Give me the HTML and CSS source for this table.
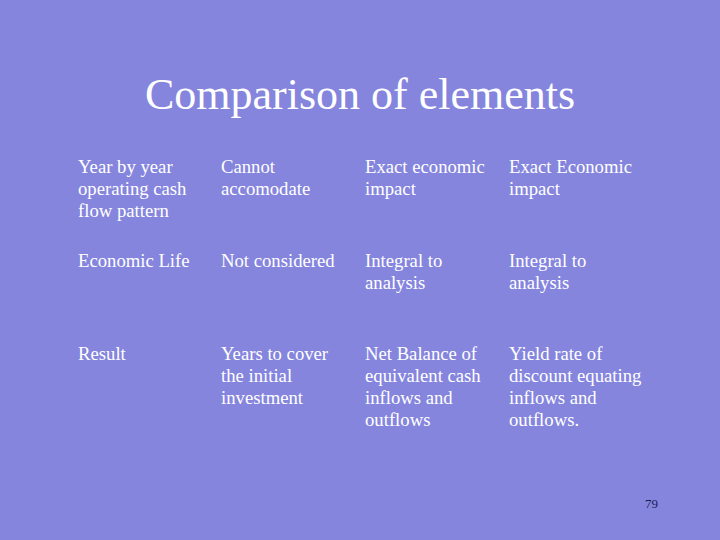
FILE: index.html
```html
<!DOCTYPE html>
<html>
<head>
<meta charset="utf-8">
<link rel="stylesheet" href="styles.css">
</head>
<body>
<div class="slide">
  <h1 class="title">Comparison of elements</h1>
  <div class="table">
    <div class="cell">Year by year<br>operating cash<br>flow pattern</div>
    <div class="cell">Cannot<br>accomodate</div>
    <div class="cell">Exact economic<br>impact</div>
    <div class="cell">Exact Economic<br>impact</div>

    <div class="cell">Economic Life</div>
    <div class="cell">Not considered</div>
    <div class="cell">Integral to<br>analysis</div>
    <div class="cell">Integral to<br>analysis</div>

    <div class="cell">Result</div>
    <div class="cell">Years to cover<br>the initial<br>investment</div>
    <div class="cell">Net Balance of<br>equivalent cash<br>inflows and<br>outflows</div>
    <div class="cell">Yield rate of<br>discount equating<br>inflows and<br>outflows.</div>
  </div>
  <div class="footer"><span class="pagenum">79</span></div>
</div>
</body>
</html>
```
FILE: styles.css
```css
html, body {
  margin: 0;
  padding: 0;
}
body {
  background: #8585de;
  width: 720px;
  height: 540px;
  overflow: hidden;
}
.slide {
  width: 720px;
  height: 540px;
  display: flex;
  flex-direction: column;
  font-family: "Liberation Serif", "Times New Roman", serif;
  color: #ffffff;
}
.title {
  margin: 0;
  padding-top: 70px;
  font-weight: normal;
  font-size: 44px;
  line-height: 50px;
  text-align: center;
}
.table {
  margin-top: 36px;
  margin-left: 78px;
  display: grid;
  grid-template-columns: 143px 144px 144px 144px;
  grid-template-rows: 94px 93px auto;
  font-size: 18.7px;
  line-height: 22px;
}
.cell {
  white-space: nowrap;
}
.footer {
  margin-top: auto;
  padding: 0 62px 29px 0;
  display: flex;
  justify-content: flex-end;
}
.pagenum {
  font-size: 13px;
  line-height: 14px;
  color: #1c1c55;
}
```
